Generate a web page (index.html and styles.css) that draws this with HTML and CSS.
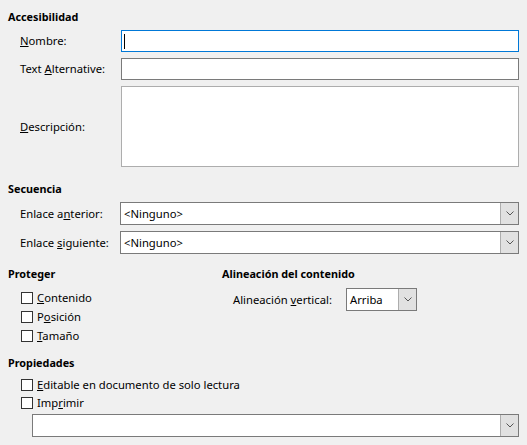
FILE: index.html
```html
<!DOCTYPE html>
<html lang="es">
<head>
<meta charset="utf-8">
<title>Accesibilidad</title>
<link rel="stylesheet" href="styles.css">
</head>
<body>
<div class="page">
  <div class="heading">Accesibilidad</div>
  <div class="form-grid acc">
    <label class="lbl"><u>N</u>ombre:</label>
    <div class="field focused"><span class="caret"></span></div>
    <label class="lbl">Text <u>A</u>lternative:</label>
    <div class="field"></div>
    <label class="lbl"><u>D</u>escripción:</label>
    <div class="field area"></div>
  </div>

  <div class="heading sec">Secuencia</div>
  <div class="form-grid seq">
    <label class="lbl">Enlace a<u>n</u>terior:</label>
    <div class="combo"><span class="combo-text">&lt;Ninguno&gt;</span><span class="combo-btn"><svg width="8" height="5" viewBox="0 0 8 5"><polyline points="0.5,0.5 4,4 7.5,0.5" fill="none" stroke="#555" stroke-width="1"/></svg></span></div>
    <label class="lbl">Enlace <u>s</u>iguiente:</label>
    <div class="combo"><span class="combo-text">&lt;Ninguno&gt;</span><span class="combo-btn"><svg width="8" height="5" viewBox="0 0 8 5"><polyline points="0.5,0.5 4,4 7.5,0.5" fill="none" stroke="#555" stroke-width="1"/></svg></span></div>
  </div>

  <div class="two-col">
    <div class="col-protect">
      <div class="heading">Proteger</div>
      <div class="checks">
        <div class="check"><span class="box"></span><span><u>C</u>ontenido</span></div>
        <div class="check"><span class="box"></span><span>P<u>o</u>sición</span></div>
        <div class="check"><span class="box"></span><span><u>T</u>amaño</span></div>
      </div>
    </div>
    <div class="col-align">
      <div class="heading">Alineación del contenido</div>
      <div class="align-row">
        <label class="lbl">Alineación <u>v</u>ertical:</label>
        <div class="combo small"><span class="combo-text">Arriba</span><span class="combo-btn"><svg width="8" height="5" viewBox="0 0 8 5"><polyline points="0.5,0.5 4,4 7.5,0.5" fill="none" stroke="#555" stroke-width="1"/></svg></span></div>
      </div>
    </div>
  </div>

  <div class="heading props">Propiedades</div>
  <div class="checks tight">
    <div class="check"><span class="box"></span><span><u>E</u>ditable en documento de solo lectura</span></div>
    <div class="check"><span class="box"></span><span>Imp<u>r</u>imir</span></div>
  </div>
  <div class="print-combo">
    <div class="combo"><span class="combo-text"></span><span class="combo-btn"><svg width="8" height="5" viewBox="0 0 8 5"><polyline points="0.5,0.5 4,4 7.5,0.5" fill="none" stroke="#555" stroke-width="1"/></svg></span></div>
  </div>
</div>
</body>
</html>
```

FILE: styles.css
```css
html, body {
  margin: 0;
  padding: 0;
  background: #f0f0f0;
}
body {
  font-family: "Noto Sans", "Segoe UI", sans-serif;
  font-size: 11.25px;
  color: #000;
}
u {
  text-decoration: underline;
  text-underline-offset: 1px;
  text-decoration-thickness: 1px;
}
.page {
  padding: 8px 8px 0 8px;
}
.heading {
  font-weight: bold;
  font-size: 10.8px;
  line-height: 18px;
  height: 18px;
  white-space: nowrap;
}
.form-grid {
  display: grid;
  row-gap: 6px;
  margin-left: 12px;
  align-items: center;
}
.acc {
  margin-top: 4px;
  grid-template-columns: 101px 1fr;
  grid-template-rows: 22px 22px 81px;
}
.lbl {
  line-height: 16px;
  white-space: nowrap;
}
.field {
  box-sizing: border-box;
  height: 22px;
  background: #fff;
  border: 1px solid #7a7a7a;
  position: relative;
}
.field.focused {
  border-color: #0078d7;
}
.field.area {
  height: 81px;
  border-color: #adadad;
}
.caret {
  position: absolute;
  left: 2px;
  top: 3px;
  width: 1px;
  height: 15px;
  background: #000;
}
.sec {
  margin-top: 13px;
}
.seq {
  margin-top: 4px;
  grid-template-columns: 100px 1fr;
  grid-template-rows: 23px 23px;
}
.combo {
  box-sizing: border-box;
  height: 23px;
  background: #fff;
  border: 1px solid #7a7a7a;
  display: flex;
  align-items: stretch;
}
.combo-text {
  flex: 1;
  padding-left: 3px;
  line-height: 21px;
  white-space: nowrap;
  overflow: hidden;
}
.combo-btn {
  width: 17px;
  background: #e1e1e1;
  border-left: 1px solid #adadad;
  display: flex;
  align-items: center;
  justify-content: center;
}
.combo-btn svg {
  display: block;
}
.two-col {
  display: flex;
  margin-top: 11px;
}
.col-protect {
  width: 214px;
}
.checks {
  margin-top: 5px;
  margin-left: 13px;
}
.check {
  display: flex;
  align-items: flex-start;
  height: 19px;
  line-height: 19px;
  white-space: nowrap;
}
.box {
  box-sizing: border-box;
  width: 12px;
  height: 12px;
  border: 1px solid #333;
  background: #fff;
  margin-top: 4px;
  margin-right: 4px;
  flex: none;
}
.align-row {
  display: flex;
  align-items: center;
  margin-top: 5px;
  margin-left: 11px;
}
.align-row .lbl {
  width: 113px;
}
.combo.small {
  width: 71px;
}
.props {
  margin-top: 9px;
}
.checks.tight {
  margin-top: 3px;
}
.checks.tight .check {
  height: 18px;
  line-height: 20px;
}
.checks.tight .box {
  margin-top: 4px;
}
.print-combo {
  margin-top: 3px;
  margin-left: 24px;
}
```
